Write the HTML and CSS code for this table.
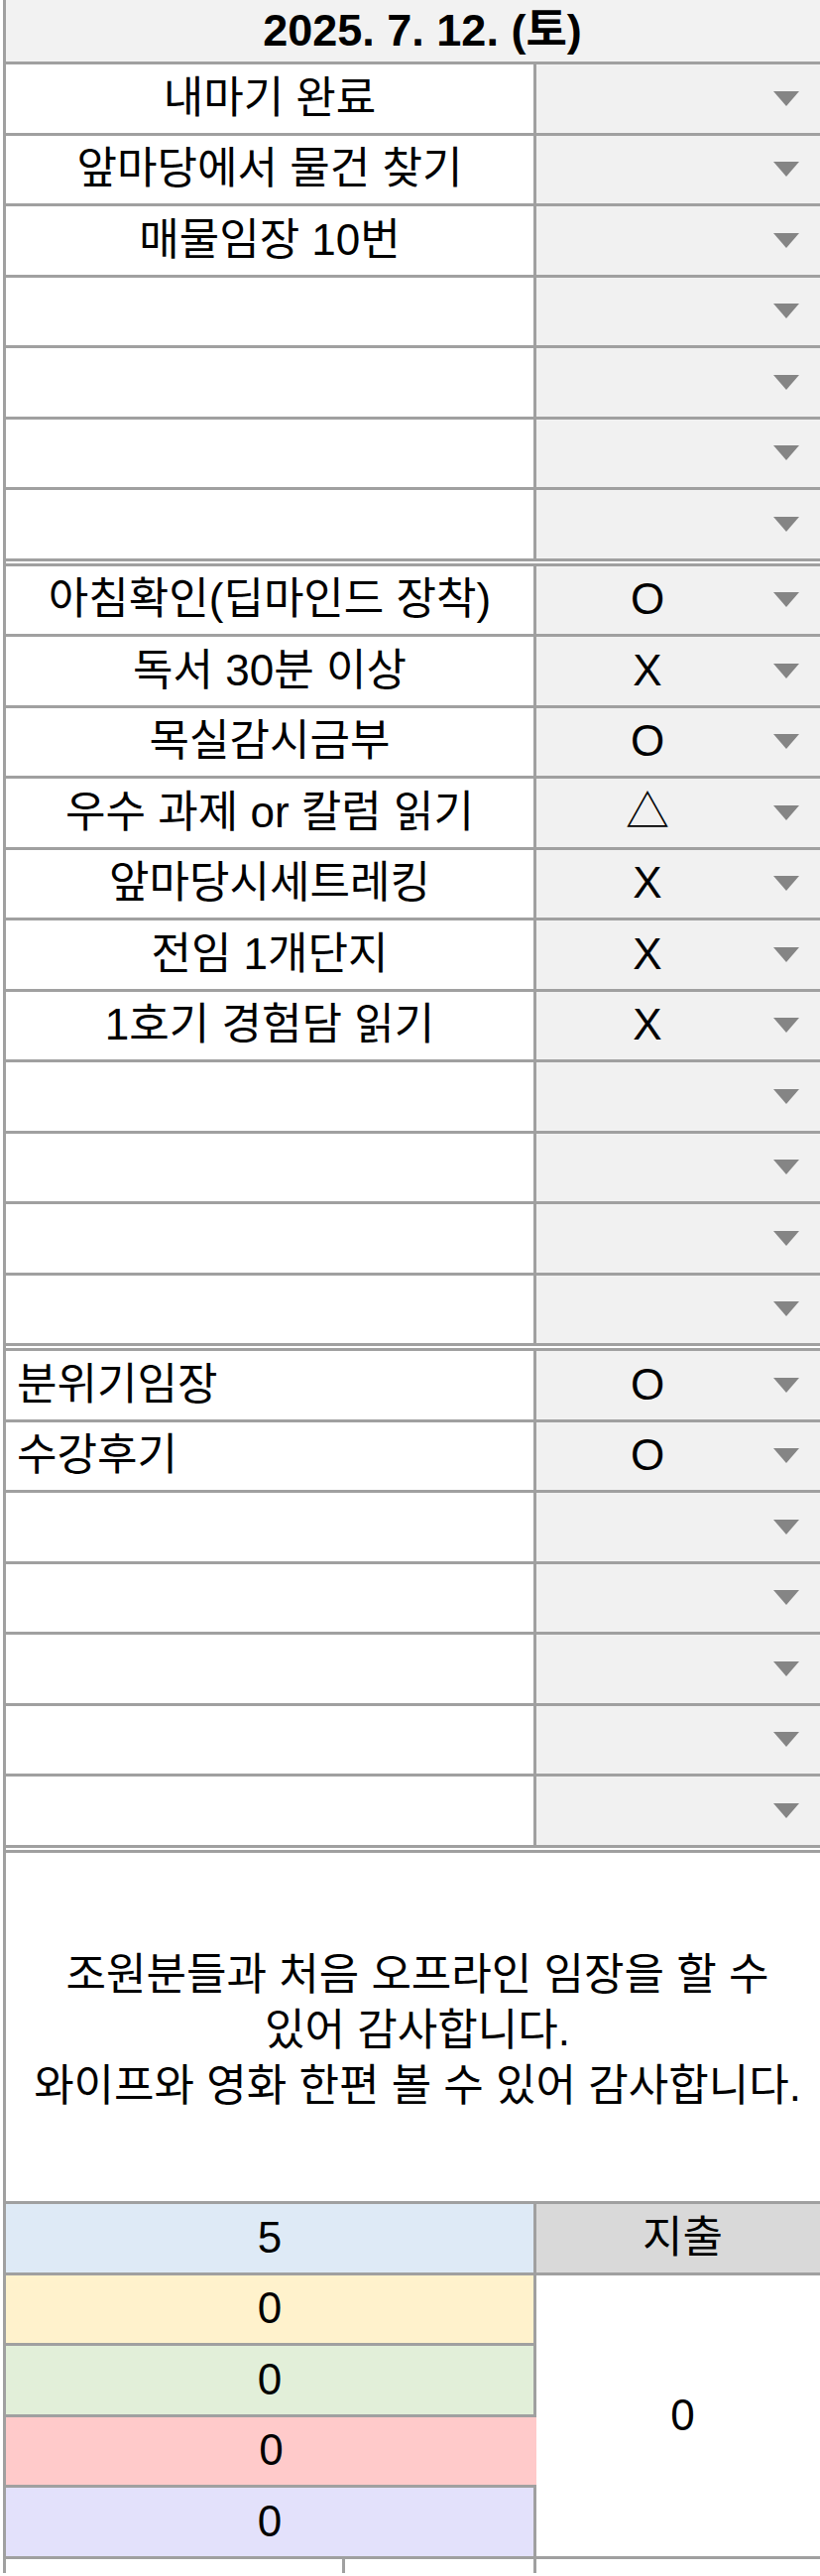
FILE: index.html
```html
<!DOCTYPE html>
<html lang="ko">
<head>
    <meta charset="UTF-8">
    <meta name="viewport" content="width=device-width, initial-scale=1.0">
    <title>2025. 7. 12. 체크리스트</title>
    <link rel="stylesheet" href="styles.css">
</head>
<body>
    <div class="sheet">
        <div class="title">2025. 7. 12. (토)</div>

        <div class="section">
            <div class="row"><div class="task">내마기 완료</div><div class="pick"><span class="val"></span><span class="arrow"></span></div></div>
            <div class="row"><div class="task">앞마당에서 물건 찾기</div><div class="pick"><span class="val"></span><span class="arrow"></span></div></div>
            <div class="row"><div class="task">매물임장 10번</div><div class="pick"><span class="val"></span><span class="arrow"></span></div></div>
            <div class="row"><div class="task"></div><div class="pick"><span class="val"></span><span class="arrow"></span></div></div>
            <div class="row"><div class="task"></div><div class="pick"><span class="val"></span><span class="arrow"></span></div></div>
            <div class="row"><div class="task"></div><div class="pick"><span class="val"></span><span class="arrow"></span></div></div>
            <div class="row"><div class="task"></div><div class="pick"><span class="val"></span><span class="arrow"></span></div></div>
        </div>

        <div class="section">
            <div class="row"><div class="task">아침확인(딥마인드 장착)</div><div class="pick"><span class="val">O</span><span class="arrow"></span></div></div>
            <div class="row"><div class="task">독서 30분 이상</div><div class="pick"><span class="val">X</span><span class="arrow"></span></div></div>
            <div class="row"><div class="task">목실감시금부</div><div class="pick"><span class="val">O</span><span class="arrow"></span></div></div>
            <div class="row"><div class="task">우수 과제 or 칼럼 읽기</div><div class="pick"><span class="val">△</span><span class="arrow"></span></div></div>
            <div class="row"><div class="task">앞마당시세트레킹</div><div class="pick"><span class="val">X</span><span class="arrow"></span></div></div>
            <div class="row"><div class="task">전임 1개단지</div><div class="pick"><span class="val">X</span><span class="arrow"></span></div></div>
            <div class="row"><div class="task">1호기 경험담 읽기</div><div class="pick"><span class="val">X</span><span class="arrow"></span></div></div>
            <div class="row"><div class="task"></div><div class="pick"><span class="val"></span><span class="arrow"></span></div></div>
            <div class="row"><div class="task"></div><div class="pick"><span class="val"></span><span class="arrow"></span></div></div>
            <div class="row"><div class="task"></div><div class="pick"><span class="val"></span><span class="arrow"></span></div></div>
            <div class="row"><div class="task"></div><div class="pick"><span class="val"></span><span class="arrow"></span></div></div>
        </div>

        <div class="section section-left">
            <div class="row"><div class="task">분위기임장</div><div class="pick"><span class="val">O</span><span class="arrow"></span></div></div>
            <div class="row"><div class="task">수강후기</div><div class="pick"><span class="val">O</span><span class="arrow"></span></div></div>
            <div class="row"><div class="task"></div><div class="pick"><span class="val"></span><span class="arrow"></span></div></div>
            <div class="row"><div class="task"></div><div class="pick"><span class="val"></span><span class="arrow"></span></div></div>
            <div class="row"><div class="task"></div><div class="pick"><span class="val"></span><span class="arrow"></span></div></div>
            <div class="row"><div class="task"></div><div class="pick"><span class="val"></span><span class="arrow"></span></div></div>
            <div class="row"><div class="task"></div><div class="pick"><span class="val"></span><span class="arrow"></span></div></div>
        </div>

        <div class="note">
            조원분들과 처음 오프라인 임장을 할 수<br>
            있어 감사합니다.<br>
            와이프와 영화 한편 볼 수 있어 감사합니다.
        </div>

        <div class="summary">
            <div class="sum-cell blue">5</div>
            <div class="sum-cell head">지출</div>
            <div class="sum-cell yellow">0</div>
            <div class="sum-cell spend">0</div>
            <div class="sum-cell green">0</div>
            <div class="sum-cell red">0</div>
            <div class="sum-cell purple">0</div>
        </div>

        <div class="tail">
            <div class="tail-a"></div>
            <div class="tail-b"></div>
            <div class="tail-c"></div>
        </div>
    </div>
</body>
</html>
```

FILE: styles.css
```css
html, body {
    overflow: hidden;
}
body {
    margin: 0;
    background: #fff;
    font-family: 'Liberation Sans', 'Noto Sans CJK KR', sans-serif;
    color: #000;
}
.sheet {
    width: 830px;
    margin-left: 3px;
    border-left: 3px solid #a0a0a0;
    font-size: 44px;
    line-height: 1.2;
}
.title {
    box-sizing: border-box;
    height: 65px;
    background: #f2f2f2;
    border-bottom: 3px solid #a0a0a0;
    display: flex;
    align-items: center;
    justify-content: center;
    padding-left: 10px;
    font-size: 45px;
    font-weight: bold;
}
.section + .section,
.note {
    margin-top: 2px;
    border-top: 3px solid #a0a0a0;
}
.row {
    box-sizing: border-box;
    height: 71.5px;
    display: flex;
    border-bottom: 3px solid #a0a0a0;
}
.task {
    box-sizing: border-box;
    width: 535px;
    flex-shrink: 0;
    border-right: 3px solid #a0a0a0;
    display: flex;
    align-items: center;
    justify-content: center;
    white-space: nowrap;
}
.section-left .task {
    justify-content: flex-start;
    padding-left: 11px;
}
.pick {
    flex: 1;
    background: #f1f1f1;
    display: flex;
    align-items: center;
}
.val {
    width: 224px;
    text-align: center;
}
.arrow {
    width: 56px;
    display: flex;
    justify-content: center;
}
.arrow::after {
    content: '';
    border-left: 13px solid transparent;
    border-right: 13px solid transparent;
    border-top: 15px solid #858585;
}
.note {
    box-sizing: border-box;
    height: 357.5px;
    border-bottom: 3px solid #a0a0a0;
    display: flex;
    align-items: center;
    justify-content: center;
    text-align: center;
    line-height: 56px;
    padding-top: 8px;
}
.summary {
    display: grid;
    grid-template-columns: 535px 1fr;
    grid-template-rows: repeat(5, 71.5px);
}
.sum-cell {
    box-sizing: border-box;
    border-bottom: 3px solid #a0a0a0;
    display: flex;
    align-items: center;
    justify-content: center;
}
.sum-cell:nth-child(odd),
.sum-cell.green,
.sum-cell.purple {
    border-right: 3px solid #a0a0a0;
}
.sum-cell.head {
    background: #d9d9d9;
    border-right: none;
}
.sum-cell.spend {
    grid-column: 2;
    grid-row: 2 / span 4;
    background: #fff;
    border-right: none;
}
.blue { background: #deeaf6; }
.yellow { background: #fff2cc; }
.green { background: #e2efd9; }
.red { background: #ffcaca; }
.purple { background: #e3e1fb; }
.tail {
    height: 14.5px;
    display: flex;
}
.tail-a {
    width: 339px;
    border-right: 3px solid #a0a0a0;
}
.tail-b {
    width: 190px;
    border-right: 3px solid #a0a0a0;
}
```
